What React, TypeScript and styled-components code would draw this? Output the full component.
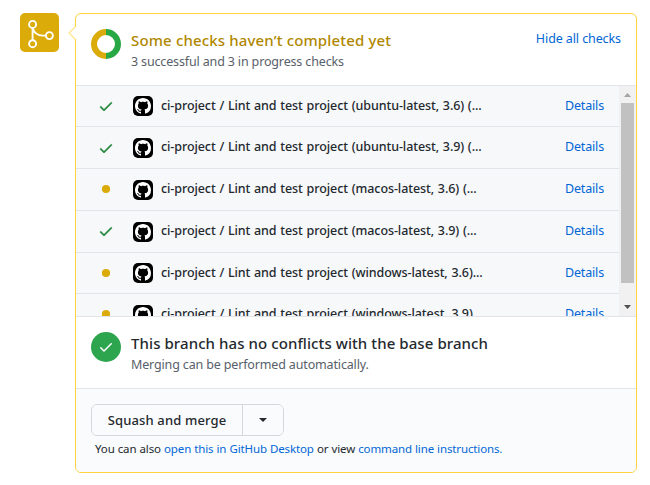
import React from "react";
import styled, { createGlobalStyle, css } from "styled-components";

const GlobalStyle = createGlobalStyle`
  * { box-sizing: border-box; }
  body {
    margin: 0;
    background: #fff;
    color: #24292e;
    font-family: "Noto Sans", "Open Sans", sans-serif;
    font-size: 13px;
    line-height: 20px;
  }
`;

const Page = styled.main`
  display: flex;
  align-items: flex-start;
  gap: 16px;
  width: 650px;
  height: 485px;
  padding: 13px 13px 12px 20px;
  overflow: hidden;
`;

const MergeBadge = styled.div`
  flex: none;
  width: 39px;
  height: 39px;
  border-radius: 5px;
  background: #dbab09;
  svg { display: block; }
`;

const Panel = styled.section`
  position: relative;
  width: 562px;
  height: 460px;
  border: 1px solid #ffd33d;
  border-radius: 6px;
`;

const Caret = styled.svg`
  position: absolute;
  left: -9px;
  top: 11px;
`;

const StatusSection = styled.header`
  display: flex;
  height: 72px;
  padding: 15px 15px 0;
  border-bottom: 1px solid #e1e4e8;
`;

const StatusIcon = styled.svg`
  flex: none;
  width: 30px;
  height: 30px;
  margin-right: 10px;
`;

const StatusText = styled.div`
  flex: 1;
  margin-top: -1px;
  white-space: nowrap;
`;

const Heading = styled.h3<{ $warning?: boolean }>`
  margin: 0;
  font-size: 15px;
  font-weight: ${(p) => (p.$warning ? 550 : 500)};
  line-height: 24px;
  letter-spacing: ${(p) => (p.$warning ? "0.15px" : "0.08px")};
  color: ${(p) => (p.$warning ? "#b08800" : "#24292e")};
`;

const Summary = styled.p`
  margin: 1px 0 0;
  font-size: 12.5px;
  line-height: 18px;
  letter-spacing: -0.15px;
  color: #586069;
`;

const linkStyle = css`
  color: #0366d6;
  text-decoration: none;
  white-space: nowrap;
`;

const ToggleLink = styled.a`
  ${linkStyle}
  height: 20px;
  font-size: 12.5px;
  letter-spacing: -0.1px;
`;

const CheckArea = styled.div`
  display: flex;
  height: 231px;
  overflow: hidden;
  background: #f6f8fa;
  border-bottom: 1px solid #e1e4e8;
`;

const CheckList = styled.ul`
  flex: 1;
  margin: 0;
  padding: 0;
  list-style: none;
`;

const CheckRow = styled.li<{ $height: number }>`
  display: flex;
  align-items: flex-start;
  height: ${(p) => p.$height}px;
  padding: 10px 15px 0;
  border-bottom: 1px solid #e1e4e8;
`;

const StateIcon = styled.svg<{ $top: number }>`
  flex: none;
  width: 30px;
  height: 20px;
  margin: ${(p) => p.$top}px 12px 0 0;
`;

const Avatar = styled.svg<{ $top: number }>`
  flex: none;
  width: 20px;
  height: 20px;
  margin: ${(p) => p.$top}px 8px 0 0;
`;

const CheckName = styled.span`
  flex: 1;
  font-size: 12.5px;
  font-weight: 500;
  letter-spacing: -0.08px;
  word-spacing: 0.6px;
  white-space: nowrap;
`;

const DetailsLink = styled.a`
  ${linkStyle}
  font-size: 12.5px;
  letter-spacing: -0.15px;
`;

const ScrollTrack = styled.div`
  display: flex;
  flex-direction: column;
  align-items: center;
  width: 17px;
  background: #f1f1f1;
  svg { display: block; flex: none; }
`;

const ScrollThumb = styled.div`
  width: 13px;
  height: 180px;
  margin-bottom: 16px;
  background: #c1c1c1;
`;

const Footer = styled.footer`
  height: 83px;
  padding: 15px;
  background: #fafbfc;
  border-radius: 0 0 5px 5px;
`;

const ButtonGroup = styled.div`
  display: flex;
  width: 193px;
  height: 32px;
  border: 1px solid #d5d8db;
  border-radius: 6px;
  overflow: hidden;
`;

const MergeButton = styled.button`
  width: 151px;
  padding: 0;
  border: 0;
  border-right: 1px solid #d5d8db;
  background: #fafbfc;
  color: #24292e;
  font: 500 13px/30px "Noto Sans", "Open Sans", sans-serif;
  letter-spacing: 0.15px;
  white-space: nowrap;
`;

const MenuButton = styled.button`
  display: flex;
  flex: 1;
  align-items: center;
  justify-content: center;
  padding: 0;
  border: 0;
  background: #fafbfc;
`;

const Hint = styled.p`
  margin: 4px 0 0 4px;
  font-size: 11.5px;
  line-height: 18px;
  letter-spacing: -0.13px;
  word-spacing: 0.25px;
  white-space: nowrap;
  a { ${linkStyle} }
`;

type State = "success" | "pending";

interface Check {
  name: string;
  state: State;
  height: number;
  iconTop: number;
  avatarTop: number;
}

const checks: Check[] = [
  { name: "ci-project / Lint and test project (ubuntu-latest, 3.6) (...", state: "success", height: 41, iconTop: 0, avatarTop: 0 },
  { name: "ci-project / Lint and test project (ubuntu-latest, 3.9) (...", state: "success", height: 42, iconTop: 1, avatarTop: 1 },
  { name: "ci-project / Lint and test project (macos-latest, 3.6) (...", state: "pending", height: 42, iconTop: 1, avatarTop: 1 },
  { name: "ci-project / Lint and test project (macos-latest, 3.9) (...", state: "success", height: 42, iconTop: 0, avatarTop: 1 },
  { name: "ci-project / Lint and test project (windows-latest, 3.6)...", state: "pending", height: 41, iconTop: 1, avatarTop: 0 },
  { name: "ci-project / Lint and test project (windows-latest, 3.9)", state: "pending", height: 42, iconTop: 1, avatarTop: 1 },
];

const CHECK_PATH =
  "M13.78 4.22a.75.75 0 010 1.06l-7.25 7.25a.75.75 0 01-1.06 0L2.22 9.28a.75.75 0 011.06-1.06L6 10.94l6.72-6.72a.75.75 0 011.06 0z";

const MARK_PATH =
  "M8 0C3.58 0 0 3.58 0 8c0 3.54 2.29 6.53 5.47 7.59.4.07.55-.17.55-.38 0-.19-.01-.82-.01-1.49-2.01.37-2.53-.49-2.69-.94-.09-.23-.48-.94-.82-1.13-.28-.15-.68-.52-.01-.53.63-.01 1.08.58 1.23.82.72 1.21 1.87.87 2.33.66.07-.52.28-.87.51-1.07-1.78-.2-3.64-.89-3.64-3.95 0-.87.31-1.59.82-2.15-.08-.2-.36-1.02.08-2.12 0 0 .67-.21 2.2.82.64-.18 1.32-.27 2-.27.68 0 1.36.09 2 .27 1.53-1.04 2.2-.82 2.2-.82.44 1.1.16 1.92.08 2.12.51.56.82 1.27.82 2.15 0 3.07-1.87 3.75-3.65 3.95.29.25.54.73.54 1.48 0 1.07-.01 1.93-.01 2.2 0 .21.15.46.55.38A8.013 8.013 0 0016 8c0-4.42-3.58-8-8-8z";

function CheckState({ state, top }: { state: State; top: number }) {
  return (
    <StateIcon viewBox="0 0 30 20" $top={top}>
      {state === "success" ? (
        <path d={CHECK_PATH} fill="#22863a" stroke="#22863a" strokeWidth="0.3" transform="translate(7 2.2)" />
      ) : (
        <circle cx="15" cy="9" r="4.1" fill="#dbab09" />
      )}
    </StateIcon>
  );
}

export default function App() {
  return (
    <>
      <GlobalStyle />
      <Page>
        <MergeBadge>
          <svg width="39" height="39" fill="none" stroke="#fff" strokeWidth="1.9">
            <circle cx="12.6" cy="11.4" r="3.5" />
            <circle cx="12.6" cy="30.7" r="3.5" />
            <circle cx="29.4" cy="22.6" r="3.5" />
            <path d="M12.6 15v12.1M12.6 15c1.4 4.8 5.5 7.6 10.4 7.6h2.8" />
          </svg>
        </MergeBadge>
        <Panel>
          <Caret width="10" height="16">
            <path d="M10 .8v14.4L1.5 8z" fill="#fff" />
            <path d="M8.5 1.5L2 8l6.5 6.5" fill="none" stroke="#ffe587" strokeWidth="1.2" />
          </Caret>
          <StatusSection>
            <StatusIcon viewBox="0 0 30 30" fill="none" strokeWidth="6">
              <path d="M15 3a12 12 0 010 24" stroke="#28a745" />
              <path d="M15 27a12 12 0 010-24" stroke="#dbab09" />
            </StatusIcon>
            <StatusText>
              <Heading $warning>Some checks haven’t completed yet</Heading>
              <Summary>3 successful and 3 in progress checks</Summary>
            </StatusText>
            <ToggleLink>Hide all checks</ToggleLink>
          </StatusSection>
          <CheckArea>
            <CheckList>
              {checks.map((c) => (
                <CheckRow key={c.name} $height={c.height}>
                  <CheckState state={c.state} top={c.iconTop} />
                  <Avatar viewBox="0 0 20 20" $top={c.avatarTop}>
                    <rect width="20" height="20" rx="5" fill="#000" />
                    <path d={MARK_PATH} fill="#fff" transform="translate(2 2)" />
                  </Avatar>
                  <CheckName>{c.name}</CheckName>
                  <DetailsLink>Details</DetailsLink>
                </CheckRow>
              ))}
            </CheckList>
            <ScrollTrack>
              <svg width="17" height="17"><path d="M5 11l3.5-4 3.5 4z" fill="#a3a3a3" /></svg>
              <ScrollThumb />
              <svg width="17" height="17"><path d="M5 6l3.5 4L12 6z" fill="#505050" /></svg>
            </ScrollTrack>
          </CheckArea>
          <StatusSection>
            <StatusIcon viewBox="0 0 30 30">
              <circle cx="15" cy="15" r="15" fill="#2da44e" />
              <path d={CHECK_PATH} fill="#fff" transform="translate(7 7)" />
            </StatusIcon>
            <StatusText>
              <Heading>This branch has no conflicts with the base branch</Heading>
              <Summary>Merging can be performed automatically.</Summary>
            </StatusText>
          </StatusSection>
          <Footer>
            <ButtonGroup>
              <MergeButton>Squash and merge</MergeButton>
              <MenuButton aria-label="Select merge method">
                <svg width="8" height="4"><path d="M0 0h8L4 4z" fill="#24292e" /></svg>
              </MenuButton>
            </ButtonGroup>
            <Hint>
              You can also <a>open this in GitHub Desktop</a> or view <a>command line instructions.</a>
            </Hint>
          </Footer>
        </Panel>
      </Page>
    </>
  );
}
